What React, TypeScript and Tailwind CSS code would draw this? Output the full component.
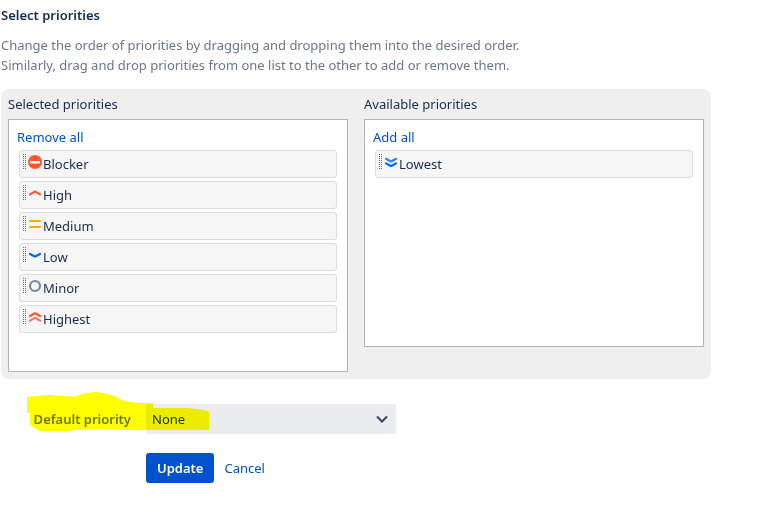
import { ReactNode, useState } from "react";

interface Priority {
  name: string;
  icon: ReactNode;
}

const SELECTED: Priority[] = [
  {
    name: "Blocker",
    icon: (
      <>
        <circle cx="8" cy="8" r="7" fill="#ff5630" />
        <rect x="3" y="7" width="10" height="2.4" rx="0.6" fill="#fff" />
      </>
    ),
  },
  { name: "High", icon: <path d="M3 9.4 L7.3 6.9 Q8 6.5 8.7 6.9 L13 9.4" stroke="#ff5630" /> },
  { name: "Medium", icon: <path d="M3 5 H13 M3 11 H13" stroke="#ffab00" /> },
  { name: "Low", icon: <path d="M3 7 L7.3 9.3 Q8 9.7 8.7 9.3 L13 7" stroke="#0065ff" /> },
  { name: "Minor", icon: <circle cx="8" cy="8" r="5" stroke="#7a869a" /> },
  {
    name: "Highest",
    icon: (
      <>
        <path d="M3 7 L7.3 4.5 Q8 4.1 8.7 4.5 L13 7" stroke="#ff5630" />
        <path d="M3 11.6 L7.3 9.1 Q8 8.7 8.7 9.1 L13 11.6" stroke="#ff7452" />
      </>
    ),
  },
];

const AVAILABLE: Priority[] = [
  {
    name: "Lowest",
    icon: (
      <>
        <path d="M3 4.8 L7.3 7.2 Q8 7.6 8.7 7.2 L13 4.8" stroke="#2684ff" />
        <path d="M3 9.4 L7.3 11.8 Q8 12.2 8.7 11.8 L13 9.4" stroke="#0065ff" />
      </>
    ),
  },
];

function DragHandle() {
  return (
    <svg className="h-4 w-1 shrink-0" viewBox="0 0 4 16" fill="none" stroke="#666" shapeRendering="crispEdges">
      <path d="M0.5 0 V15 M2.5 0 V15" strokeDasharray="1 1" />
    </svg>
  );
}

function PriorityItem({ priority }: { priority: Priority }) {
  return (
    <li
      draggable
      className="flex h-7 items-start rounded-[3px] border border-[#dcdcdc] bg-[#f6f6f6] pl-[3px] pt-[3px] cursor-move"
    >
      <DragHandle />
      <svg className="w-4 h-4 shrink-0" viewBox="0 0 16 16" fill="none" strokeWidth={2.2} strokeLinecap="round" strokeLinejoin="round">
        {priority.icon}
      </svg>
      <span>{priority.name}</span>
    </li>
  );
}

interface ListProps {
  title: string;
  action: string;
  priorities: Priority[];
}

function PriorityList({ title, action, priorities }: ListProps) {
  return (
    <section className="min-w-0 flex-1">
      <h3 className="mb-[5px]">{title}</h3>
      <div className="min-h-[228px] border border-[#b5b5b5] bg-white px-[10px] pt-[7px] pb-[38px]">
        <a href="#" className="-ml-[2px] text-[#0052cc] hover:underline">{action}</a>
        <ul className="mt-[3px] space-y-[3px]">
          {priorities.map((p) => (
            <PriorityItem key={p.name} priority={p} />
          ))}
        </ul>
      </div>
    </section>
  );
}

/* marker stroke over the default priority field */
function Marker() {
  return (
    <svg
      className="pointer-events-none absolute left-[26px] -top-3 h-[39px] w-[183px] mix-blend-multiply"
      viewBox="81 36 549 117"
      aria-hidden="true"
    >
      <path
        fill="#ff0"
        d="M81 50 L145 45 L225 50 L245 41 L285 36 L325 42 L350 52 L370 62 L400 68 L459 70 V84 H560 L600 88 L628 95 V150 H400 L285 148 L220 150 L218 153 H122 L100 143 L90 132 V98 H81 Z"
      />
    </svg>
  );
}

export default function App() {
  const [value, setValue] = useState("None");

  return (
    <main className="min-h-screen bg-white pl-px pr-4 pt-[5px] font-['Noto_Sans','Open_Sans',sans-serif] text-[13px] leading-5 text-[#172b4d]">
      <h2 className="font-semibold">Select priorities</h2>
      <p className="mt-[10px] text-[#6b778c]">
        Change the order of priorities by dragging and dropping them into the desired order.
        <br />
        Similarly, drag and drop priorities from one list to the other to add or remove them.
      </p>

      <div className="mt-[14px] flex max-w-[710px] items-start gap-4 rounded-lg bg-[#efefef] px-[7px] pt-[5px] pb-[7px]">
        <PriorityList title="Selected priorities" action="Remove all" priorities={SELECTED} />
        <PriorityList title="Available priorities" action="Add all" priorities={AVAILABLE} />
      </div>

      <form className="mt-[25px]" onSubmit={(e) => e.preventDefault()}>
        <div className="relative flex items-center">
          <label htmlFor="default-priority" className="w-[145px] pr-[15px] text-right font-semibold text-[#6b778c]">
            Default priority
          </label>
          <div className="relative w-[250px]">
            <select
              id="default-priority"
              value={value}
              onChange={(e) => setValue(e.target.value)}
              className="block h-[30px] w-full appearance-none rounded-[3px] bg-[#ebecf0] px-[6px]"
            >
              <option>None</option>
              {SELECTED.map((p) => (
                <option key={p.name}>{p.name}</option>
              ))}
            </select>
            <svg
              className="pointer-events-none absolute right-2 top-[9px] h-3 w-3"
              viewBox="0 0 12 12"
              fill="none"
              stroke="#344563"
              strokeWidth={2}
            >
              <path d="M1 3.5 L6 8.5 L11 3.5" />
            </svg>
          </div>
          <Marker />
        </div>

        <div className="mt-[19px] ml-[145px] flex items-center gap-[10px]">
          <button type="submit" className="h-[30px] rounded-[3px] bg-[#0052cc] px-[11px] font-semibold text-white">
            Update
          </button>
          <a href="#" className="text-[#0052cc] hover:underline">Cancel</a>
        </div>
      </form>
    </main>
  );
}
